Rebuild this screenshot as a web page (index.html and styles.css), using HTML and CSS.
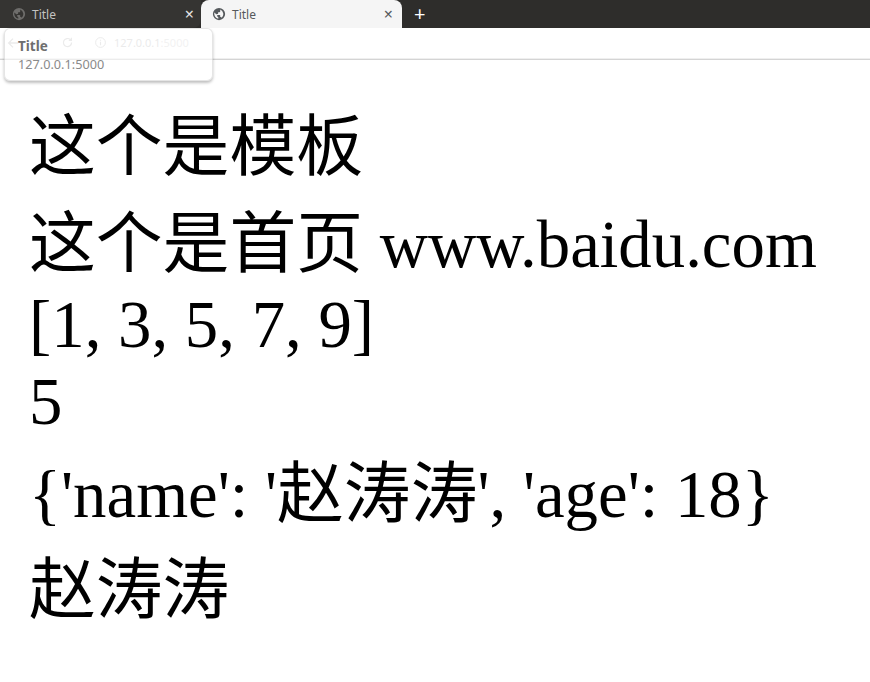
FILE: index.html
```html
<!DOCTYPE html>
<html lang="zh">
<head>
<meta charset="utf-8">
<title>Title</title>
<link rel="stylesheet" href="styles.css">
</head>
<body>
<div class="chrome">
  <div class="tabstrip">
    <div class="tab tab-inactive">
      <svg class="globe" viewBox="0 0 16 16"><path fill="currentColor" fill-rule="evenodd" d="M8 1a7 7 0 1 0 0 14A7 7 0 0 0 8 1zM2.8 6.4 6 9.5v.9c0 .7.5 1.2 1.2 1.2v1.7a5.6 5.6 0 0 1-4.4-7zm8.3 5.8c-.2-.5-.6-.8-1.1-.8h-.6V9.700c0-.3-.3-.6-.6-.6H5.200V7.900h1.200c.3 0 .6-.3.6-.6V6.100h1.200c.7 0 1.200-.5 1.200-1.200V2.900a5.600 5.600 0 0 1 1.700 9.300z"/></svg>
      <span class="tab-title">Title</span>
      <span class="tab-close">×</span>
    </div>
    <div class="tab tab-active">
      <svg class="globe" viewBox="0 0 16 16"><path fill="currentColor" fill-rule="evenodd" d="M8 1a7 7 0 1 0 0 14A7 7 0 0 0 8 1zM2.8 6.4 6 9.5v.9c0 .7.5 1.2 1.2 1.2v1.7a5.6 5.6 0 0 1-4.4-7zm8.3 5.8c-.2-.5-.6-.8-1.1-.8h-.6V9.700c0-.3-.3-.6-.6-.6H5.200V7.900h1.200c.3 0 .6-.3.6-.6V6.100h1.200c.7 0 1.200-.5 1.200-1.200V2.900a5.600 5.600 0 0 1 1.700 9.300z"/></svg>
      <span class="tab-title">Title</span>
      <span class="tab-close">×</span>
    </div>
    <span class="new-tab">+</span>
  </div>
  <div class="toolbar">
    <svg class="nav-arrow" viewBox="0 0 16 16"><path d="M14 8H3M8 3 3 8l5 5" fill="none" stroke="currentColor" stroke-width="1.5"/></svg>
    <svg class="nav-arrow nav-fwd" viewBox="0 0 16 16"><path d="M2 8h11M8 3l5 5-5 5" fill="none" stroke="currentColor" stroke-width="1.5"/></svg>
    <svg class="reload" viewBox="0 0 16 16"><path d="M13 8a5 5 0 1 1-1.500-3.500" fill="none" stroke="currentColor" stroke-width="1.500"/><path d="M13.500 1.500v4.500H9z" fill="currentColor"/></svg>
    <svg class="info" viewBox="0 0 16 16"><circle cx="8" cy="8" r="6" fill="none" stroke="currentColor" stroke-width="1.200"/><path d="M8 7v4.500M8 4.500v1.200" stroke="currentColor" stroke-width="1.400"/></svg>
    <span class="url"><span class="url-host">127.0.0.1</span>:5000</span>
  </div>
</div>
<div class="hover-card">
  <div class="card-title">Title</div>
  <div class="card-url">127.0.0.1:5000</div>
</div>
<main class="content">
  <div class="line line-first">这个是模板</div>
  <div class="line">这个是首页 www.baidu.com</div>
  <div class="line">[1, 3, 5, 7, 9]</div>
  <div class="line">5</div>
  <div class="line">{'name': '赵涛涛', 'age': 18}</div>
  <div class="line">赵涛涛</div>
</main>
</body>
</html>
```
FILE: styles.css
```css
html, body { margin: 0; padding: 0; background: #fff; overflow: hidden; }
body { width: 870px; height: 682px; position: relative; }
.chrome { font-family: "Noto Sans", "Open Sans", sans-serif; }
.tabstrip { display: flex; align-items: stretch; height: 28px; background: #2e2d2b; }
.tab { display: flex; align-items: center; box-sizing: border-box; font-size: 12px; padding: 0 7px 0 12px; }
.tab-inactive { color: #c4c3c1; background: #353432; width: 201px; border-radius: 0 0 8px 0; }
.tab-active { color: #55595c; background: #f5f5f5; width: 201px; border-radius: 8px 8px 0 0; padding: 0 9px 0 11px; }
.globe { width: 14px; height: 14px; margin-right: 6px; flex: none; }
.tab-inactive .globe { color: #6e6d6b; }
.tab-title { flex: 1; }
.tab-close { font-size: 16px; line-height: 1; }
.tab-inactive .tab-close { color: #e6e6e6; }
.new-tab { color: #fff; font-size: 20px; line-height: 27px; margin-left: 12px; }
.toolbar { display: flex; align-items: center; height: 32px; padding: 0 0 2px 6px; box-sizing: border-box; background: #fff; border-bottom: 1px solid #d4d4d4; box-shadow: inset 0 -1px 0 #efefef; color: #d2d2d2; font-size: 11px; }
.nav-arrow { width: 14px; height: 14px; margin-right: 12px; }
.nav-fwd { color: #e8e8e8; }
.reload { width: 13px; height: 13px; margin-left: 3px; }
.info { width: 13px; height: 13px; margin-left: 20px; }
.url { margin-left: 7px; color: #e2e2e2; }
.url-host { color: #d2d2d2; }
.hover-card { position: absolute; left: 4px; top: 28px; width: 209px; height: 53px; box-sizing: border-box; padding: 8px 13px 0; border: 1px solid rgba(0,0,0,.1); border-radius: 6px; background: rgba(255,255,255,.55); box-shadow: 0 2px 3px rgba(0,0,0,.25); font-family: "Noto Sans", "Open Sans", sans-serif; font-size: 12.7px; line-height: 18px; color: #8a8a8a; }
.card-title { font-weight: 700; font-size: 13.5px; color: #6e6e6e; }
.content { padding: 33px 29px 0; color: #000; font-family: "Liberation Serif", "Noto Sans CJK SC", serif; font-size: 66.8px; }
.line-first { height: 97px; }
```
